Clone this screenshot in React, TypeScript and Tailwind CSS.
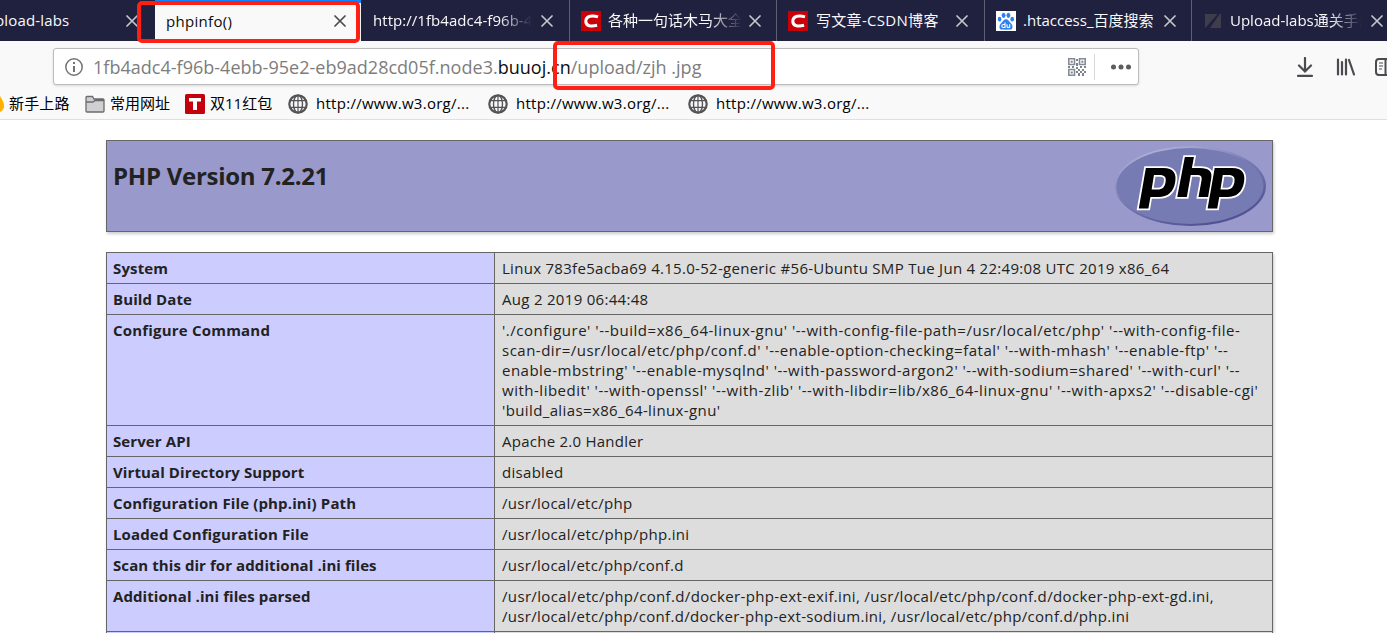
import React from 'react';

const ROWS = [
  { name: 'System', label: 'tracking-[0.15px]', lines: [{ text: 'Linux 783fe5acba69 4.15.0-52-generic #56-Ubuntu SMP Tue Jun 4 22:49:08 UTC 2019 x86_64', spacing: 'tracking-[0.29px]' }] },
  { name: 'Build Date', label: 'tracking-[0.1px]', lines: [{ text: 'Aug 2 2019 06:44:48', spacing: 'tracking-[0.3px]' }] },
  {
    name: 'Configure Command',
    label: 'tracking-[0.2px]',
    lines: [
      { text: "'./configure' '--build=x86_64-linux-gnu' '--with-config-file-path=/usr/local/etc/php' '--with-config-file-", spacing: 'tracking-[0.52px]' },
      { text: "scan-dir=/usr/local/etc/php/conf.d' '--enable-option-checking=fatal' '--with-mhash' '--enable-ftp' '--", spacing: 'tracking-[0.49px]' },
      { text: "enable-mbstring' '--enable-mysqlnd' '--with-password-argon2' '--with-sodium=shared' '--with-curl' '--", spacing: 'tracking-[0.48px]' },
      { text: "with-libedit' '--with-openssl' '--with-zlib' '--with-libdir=lib/x86_64-linux-gnu' '--with-apxs2' '--disable-cgi'", spacing: 'tracking-[0.51px]' },
      { text: "'build_alias=x86_64-linux-gnu'", spacing: 'tracking-[0.38px]' },
    ],
  },
  { name: 'Server API', label: 'tracking-[0.1px]', lines: [{ text: 'Apache 2.0 Handler', spacing: 'tracking-[0.25px]' }] },
  { name: 'Virtual Directory Support', label: 'tracking-[0.1px]', lines: [{ text: 'disabled', spacing: 'tracking-[0.3px]' }] },
  { name: 'Configuration File (php.ini) Path', label: 'tracking-[0.14px]', lines: [{ text: '/usr/local/etc/php', spacing: 'tracking-[0.3px]' }] },
  { name: 'Loaded Configuration File', label: 'tracking-[0.14px]', lines: [{ text: '/usr/local/etc/php/php.ini', spacing: 'tracking-[0.33px]' }] },
  { name: 'Scan this dir for additional .ini files', label: 'tracking-[0.08px]', lines: [{ text: '/usr/local/etc/php/conf.d', spacing: 'tracking-[0.3px]' }] },
  {
    name: 'Additional .ini files parsed',
    label: 'tracking-[0.08px]',
    lines: [
      { text: '/usr/local/etc/php/conf.d/docker-php-ext-exif.ini, /usr/local/etc/php/conf.d/docker-php-ext-gd.ini,', spacing: 'tracking-[0.345px]' },
      { text: '/usr/local/etc/php/conf.d/docker-php-ext-sodium.ini, /usr/local/etc/php/conf.d/php.ini', spacing: 'tracking-[0.32px]' },
    ],
  },
];

function Close({ dark = false }: { dark?: boolean }) {
  return (
    <svg viewBox="0 0 12 12" className={`w-3 h-3 shrink-0 ${dark ? 'text-[#4a4a4f]' : 'text-[#c5c5cc]'}`}>
      <path d="M1 1l10 10M11 1L1 11" stroke="currentColor" strokeWidth="1.7" strokeLinecap="round" />
    </svg>
  );
}

function CsdnIcon() {
  return (
    <svg viewBox="0 0 20 20" className="w-5 h-5 shrink-0">
      <rect width="20" height="20" fill="#c90007" />
      <path d="M17 5.9C12 4.300 5.200 4.400 4.800 10c-.3 5.600 6 5.500 11.300 4.300" fill="none" stroke="#fff" strokeWidth="3" />
    </svg>
  );
}

function BaiduIcon() {
  return (
    <svg viewBox="0 0 20 20" className="w-5 h-5 shrink-0">
      <rect width="20" height="20" fill="#fff" />
      <g fill="#2d7ff2">
        <ellipse cx="7.6" cy="4.3" rx="1.9" ry="2.6" />
        <ellipse cx="12.4" cy="4.3" rx="1.9" ry="2.6" />
        <ellipse cx="3.6" cy="8.2" rx="1.8" ry="2.4" />
        <ellipse cx="16.2" cy="8.2" rx="1.8" ry="2.4" />
        <path d="M10 8.3c2.2 0 3 2.200 4.600 3.600 2.300 2 3 6.300-.6 6.700-2.300.2-5.700.2-8 0-3.600-.4-2.900-4.700-.6-6.700C7 10.500 7.800 8.300 10 8.300z" />
      </g>
      <path d="M9 11.500v5H7.300c-2 0-2-3 0-3H9M11 13.300v2.200c0 1.300 2.700 1.300 2.700 0v-2.200m0 0v3.400" fill="none" stroke="#fff" strokeWidth="1.100" />
    </svg>
  );
}

function SlashIcon() {
  return (
    <svg viewBox="0 0 18 18" className="w-[18px] h-[18px] shrink-0">
      <path d="M1 2h13L1 17zM17 0v16H6z" fill="#3d3d4b" />
      <path d="M16.500 0L1 17.500" stroke="#20213f" strokeWidth="1.500" />
    </svg>
  );
}

function Globe() {
  return (
    <svg viewBox="0 0 20 20" className="mt-px w-5 h-5 shrink-0">
      <g fill="none" stroke="#545456">
        <circle cx="10" cy="10" r="8.700" strokeWidth="2.200" />
        <ellipse cx="10" cy="10" rx="4.500" ry="8.700" strokeWidth="1.400" />
        <path d="M10 1v18M2 6.600h16M2 13.400h16" strokeWidth="1.200" />
      </g>
    </svg>
  );
}

function QrIcon() {
  return (
    <svg viewBox="0 0 18 18" className="w-[18px] h-[18px]">
      <g fill="none" stroke="#858b96" strokeWidth="1.600">
        <path d="M.8.800h5.700v5.700H.8zM11.500.800h5.700v5.700h-5.700zM.8 11.500h5.700v5.700H.8z" />
      </g>
      <g fill="#7d828c">
        <path d="M2.700 2.700h2v2h-2zM13.400 2.700h2v2h-2zM2.700 13.400h2v2h-2zM8 1h2v2H8zM8 5h2v3H8zM0 8h2v2H0zM4 8h2v2H4zM8 9h2v2H8zM12 8h2v2h-2zM16 8h2v2h-2zM10 11h2v2h-2zM14 11h2v2h-2zM8 13h2v2H8zM12 13h2v2h-2zM16 13h2v2h-2zM10 15h2v3h-2zM14 15h2v3h-2z" />
      </g>
    </svg>
  );
}

function PhpLogo() {
  return (
    <svg viewBox="0 0 152 82" className="w-[152px] h-[82px]">
      <defs>
        <linearGradient id="rim" x1="0.2" y1="0" x2="0.8" y2="1">
          <stop offset="0" stopColor="#b4b7dc" />
          <stop offset="0.45" stopColor="#777bb3" />
          <stop offset="1" stopColor="#484a8c" />
        </linearGradient>
      </defs>
      <ellipse cx="75.5" cy="40" rx="75.5" ry="40" fill="url(#rim)" />
      <ellipse cx="75" cy="40" rx="73.5" ry="38" fill="#777bb3" />
      <path
        transform="translate(0 -1) scale(1.012 1)"
        d="M30.500 23H48C58 23 61 29 59.500 37C58 47 52 52 43 52H35L33 63.500H23.500ZM38.500 30L36.200 44.500H42C47 44.500 49.200 42 50 37C50.800 32 49 30 44 30ZM69 12H78L76 23H84C93 23 96.500 26.500 95 34L92 52H82.500L85.500 35.500C86.200 31.500 85 30 81 30H74.800L71 52H61.500ZM98.500 23H116C126 23 129 29 127.500 37C126 47 120 52 111 52H103L101 63.500H91.500ZM106.500 30L104.200 44.500H110C115 44.500 117.200 42 118 37C118.800 32 117 30 112 30Z"
        fill="#000"
        stroke="#fff"
        strokeWidth="3.5"
        fillRule="evenodd"
        paintOrder="stroke"
      />
    </svg>
  );
}

export default function App() {
  return (
    <div className="relative w-[1387px] h-[633px] overflow-hidden bg-white font-['Open_Sans','Noto_Sans_CJK_SC',sans-serif] text-[15px] leading-5 text-[#222] whitespace-nowrap">
      {/* Tab strip */}
      <div className="flex h-[41px] bg-[#20213f] text-[#f9f9fa]">
        <div className="flex w-[155px] shrink-0 items-center">
          <span className="-ml-[5px] mb-0.5 w-[131px] tracking-[0.15px]">pload-labs</span>
          <Close />
        </div>
        <div className="flex w-[206px] shrink-0 items-center border-t-[3px] border-[#0a84ff] bg-[#f9f9fa] pb-[2px] pl-[11px] text-[#0c0c0d]">
          <span className="mb-px w-[168px] tracking-[0.3px]">phpinfo()</span>
          <Close dark />
        </div>
        <div className="flex w-[208px] shrink-0 items-center pl-3">
          <span className="mb-0.5 mr-[6px] w-[162px] overflow-hidden tracking-[0.05px] mask-r-from-78% mask-r-to-98%">http://1fb4adc4-f96b-4ebb</span>
          <Close />
        </div>
        <div className="flex w-[207px] shrink-0 items-center border-l border-[#5e5f75] pl-[11px]">
          <CsdnIcon />
          <span className="mb-0.5 ml-[7px] mr-[7px] w-[134px] overflow-hidden mask-r-from-75%">各种一句话木马大全</span>
          <Close />
        </div>
        <div className="flex w-[208px] shrink-0 items-center border-l border-[#5e5f75] pl-[11px]">
          <CsdnIcon />
          <span className="mb-0.5 ml-2 w-[140px] tracking-[0.3px]">写文章-CSDN博客</span>
          <Close />
        </div>
        <div className="flex w-[207px] shrink-0 items-center border-l border-[#5e5f75] pl-[11px]">
          <BaiduIcon />
          <span className="mb-0.5 ml-[7px] w-[141px]">.htaccess_百度搜索</span>
          <Close />
        </div>
        <div className="flex w-[196px] shrink-0 items-center border-l border-[#5e5f75] pl-3">
          <SlashIcon />
          <span className="mb-0.5 ml-2 mr-[9px] w-[132px] overflow-hidden mask-r-from-75%">Upload-labs通关手册</span>
          <Close />
        </div>
      </div>

      {/* Address bar */}
      <div className="flex h-[52px] items-center bg-[#f9f9fa] pb-px pl-[53px]">
        <div className="flex h-[37px] w-[1086px] shrink-0 items-center rounded-[3px] border border-[#bcbcbe] bg-white pl-[11px] shadow-sm">
          <svg viewBox="0 0 18 18" className="w-[18px] h-[18px]">
            <circle cx="9" cy="9" r="8.2" fill="none" stroke="#737373" strokeWidth="1.5" />
            <path d="M9 4v2M9 8v6" stroke="#737373" strokeWidth="2" />
          </svg>
          <div className="ml-[10px] w-[975px] text-lg text-[#7d7d7d] tracking-[0.02px]">
            <span>1fb4adc4-f96b-4ebb-95e2-eb9ad28cd05f.node3.</span>
            <span className="text-[#0c0c0d]">buuoj.cn</span>
            <span>/upload/zjh .jpg</span>
          </div>
          <QrIcon />
          <div className="ml-2 h-[26px] w-px bg-[#d7d7db]" />
          <svg viewBox="0 0 20 6" className="ml-4 h-1.5 w-5 fill-[#5c5c60]">
            <circle cx="2.5" cy="3" r="2.5" />
            <circle cx="10" cy="3" r="2.5" />
            <circle cx="17.5" cy="3" r="2.5" />
          </svg>
        </div>
        <svg viewBox="0 0 16 20" className="ml-[158px] h-5 w-4 shrink-0" fill="none" stroke="#4a4a4f" strokeWidth="2.2" strokeLinecap="round">
          <path d="M8 1v13M2 8.500l6 6 6-6M1 18.800h14" />
        </svg>
        <svg viewBox="0 0 20 18" className="ml-[23px] h-[18px] w-5 shrink-0" fill="none" stroke="#4a4a4f" strokeWidth="2.2" strokeLinecap="round">
          <path d="M2 1.500v15M6 4v12.500M10 1.500v15M13 2l5 14.500" />
        </svg>
        <svg viewBox="0 0 22 18" className="ml-[19px] h-[18px] w-[22px] shrink-0" fill="none" stroke="#4a4a4f" strokeWidth="2">
          <rect x="1" y="1" width="20" height="16" rx="3" />
          <path d="M10.500 1v16" />
          <path d="M4 5h4M4 8h4M4 11h3" strokeWidth="1.2" />
        </svg>
      </div>

      {/* Bookmarks */}
      <div className="flex h-[27px] items-start border-b border-[#e0e0e1] bg-[#f9f9fa] text-black">
        <svg viewBox="0 0 4 16" className="mt-[3px] h-4 w-1 shrink-0">
          <path d="M0 0q5 8 4 11-1 4-4 5z" fill="#ffb000" />
        </svg>
        <span className="ml-[5px] w-[76px] tracking-[0.15px]">新手上路</span>
        <svg viewBox="0 0 20 18" className="mt-0.5 h-[18px] w-5 shrink-0" fill="#d0d0d2" stroke="#6b6b6e" strokeWidth="1.3">
          <path d="M1 16V2.500Q1 1.500 2 1.500h5.500l1.500 2.500h9q1 0 1 1V16q0 1-1 1H2q-1 0-1-1zM1 7h7l2-1.500h9" />
        </svg>
        <span className="ml-[5px] w-[75px]">常用网址</span>
        <svg viewBox="0 0 20 20" className="mt-px h-5 w-5 shrink-0">
          <rect width="20" height="20" rx="1.5" fill="#c3000b" />
          <path d="M4 4h12v3.500h-4V16H8V7.500H4z" fill="#fff" />
        </svg>
        <span className="ml-[5px] w-[78px]">双11红包</span>
        <Globe />
        <span className="ml-2 w-[172px] tracking-[0.28px]">http://www.w3.org/...</span>
        <Globe />
        <span className="ml-2 w-[172px] tracking-[0.28px]">http://www.w3.org/...</span>
        <Globe />
        <span className="ml-2 tracking-[0.28px]">http://www.w3.org/...</span>
      </div>

      {/* phpinfo page */}
      <div className="ml-[106px] mt-5 w-[1167px]">
        <div className="flex h-[92px] justify-between border border-[#666] bg-[#9999cc] pl-1.5 pr-[5px] pt-[5px] shadow-[1px_2px_3px_#ccc]">
          <h1 className="mt-[14px] text-[24px] font-bold leading-8 tracking-[-0.27px]">PHP Version 7.2.21</h1>
          <PhpLogo />
        </div>
        <div className="mt-5 h-[400px] border border-b-0 border-[#666] shadow-[1px_2px_3px_#ccc]">
          {ROWS.map((row) => (
            <div key={row.name} className="flex border-b border-[#666]">
              <div className={`w-[388px] shrink-0 border-r border-[#666] bg-[#ccccff] px-1.5 py-[5px] font-bold ${row.label}`}>{row.name}</div>
              <div className="grow bg-[#ddd] pl-[7px] pr-1.5 py-[5px]">
                {row.lines.map((line) => (
                  <div key={line.text} className={line.spacing}>{line.text}</div>
                ))}
              </div>
            </div>
          ))}
          <div className="flex h-5">
            <div className="w-[388px] border-r border-[#666] bg-[#ccccff]" />
            <div className="grow bg-[#ddd]" />
          </div>
        </div>
      </div>

      {/* Red highlight frames */}
      <div className="absolute left-[137px] top-px h-[42px] w-[223px] rounded-[5px] border-4 border-[#ff1f14]" />
      <div className="absolute left-[553px] top-[41px] h-[49px] w-[222px] rounded-[5px] border-4 border-[#ff1f14]" />
    </div>
  );
}
